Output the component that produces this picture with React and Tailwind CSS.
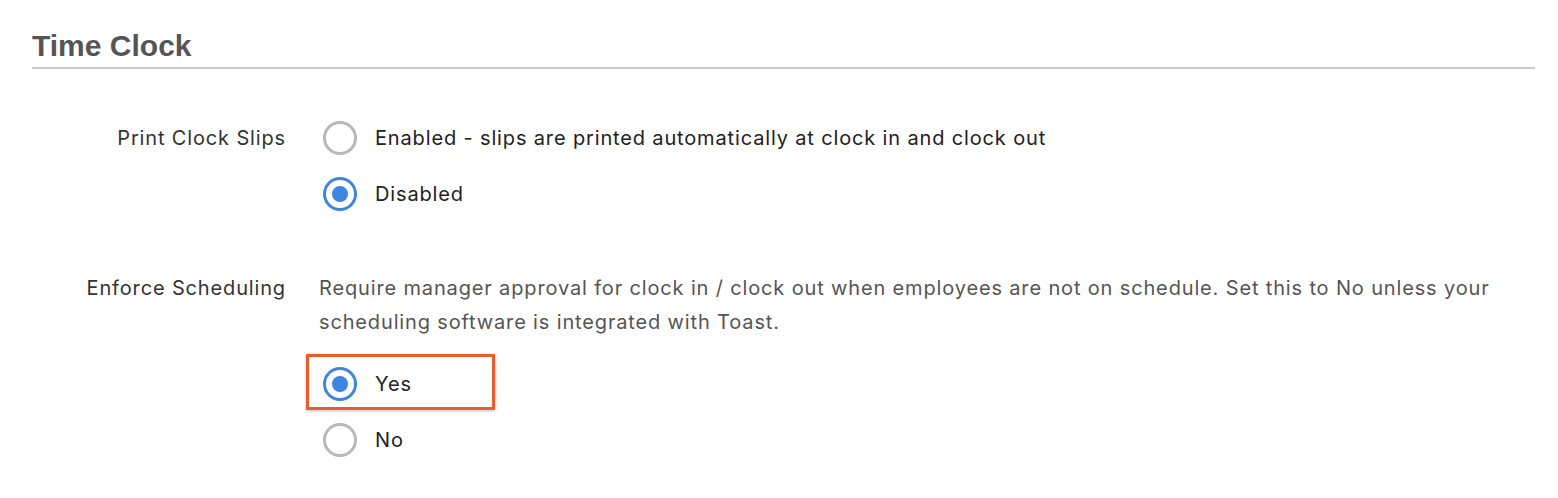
import React, { useState } from "react";

const Radio = ({ checked }) => (
  <span
    className={`flex h-[34px] w-[34px] shrink-0 items-center justify-center rounded-full border-[3px] bg-white ${
      checked ? "border-[#3d85e0]" : "border-[#b8b8b8]"
    }`}
  >
    {checked && <span className="h-[16px] w-[16px] rounded-full bg-[#3d85e0]" />}
  </span>
);

const Option = ({ label, checked, onClick, highlight }) => (
  <div className="relative flex h-[56px] items-center pl-[4px]" onClick={onClick}>
    {highlight && (
      <span className="pointer-events-none absolute left-[-13px] top-[-2px] h-[56px] w-[189px] border-[3px] border-[#ea5c2b] shadow-[0_1px_3px_rgba(0,0,0,0.25)]" />
    )}
    <Radio checked={checked} />
    <span className="ml-[18px] text-[20px] tracking-[0.85px] text-[#222]">{label}</span>
  </div>
);

export default function App() {
  const [slips, setSlips] = useState("disabled");
  const [enforce, setEnforce] = useState("yes");

  return (
    <div className="min-h-screen bg-white font-['Inter',sans-serif]">
      <div className="ml-[32px] mr-[23px]">
        {/* Header */}
        <div className="border-b-2 border-[#c8c8cd] pt-[28px] pb-[3px]">
          <h1 className="font-['Liberation_Sans',Arial,sans-serif] text-[30px] font-bold leading-[36px] text-[#555]">
            Time Clock
          </h1>
        </div>

        {/* Print Clock Slips */}
        <div className="mt-[41px] grid grid-cols-[254px_1fr] gap-x-[33px]">
          <div className="flex h-[56px] items-center justify-end text-[20px] tracking-[0.85px] text-[#333]">
            Print Clock Slips
          </div>
          <div>
            <Option
              label="Enabled - slips are printed automatically at clock in and clock out"
              checked={slips === "enabled"}
              onClick={() => setSlips("enabled")}
            />
            <Option label="Disabled" checked={slips === "disabled"} onClick={() => setSlips("disabled")} />
          </div>
        </div>

        {/* Enforce Scheduling */}
        <div className="mt-[49px] grid grid-cols-[254px_1fr] gap-x-[33px]">
          <div className="flex h-[34px] items-center justify-end text-[20px] tracking-[0.85px] text-[#333]">
            Enforce Scheduling
          </div>
          <div>
            <p className="text-[20px] leading-[34px] tracking-[0.85px] text-[#555]">
              Require manager approval for clock in / clock out when employees are not on schedule. Set this to No unless your
              scheduling software is integrated with Toast.
            </p>
            <div className="mt-[17px]">
              <Option label="Yes" checked={enforce === "yes"} onClick={() => setEnforce("yes")} highlight />
              <Option label="No" checked={enforce === "no"} onClick={() => setEnforce("no")} />
            </div>
          </div>
        </div>
      </div>
    </div>
  );
}
